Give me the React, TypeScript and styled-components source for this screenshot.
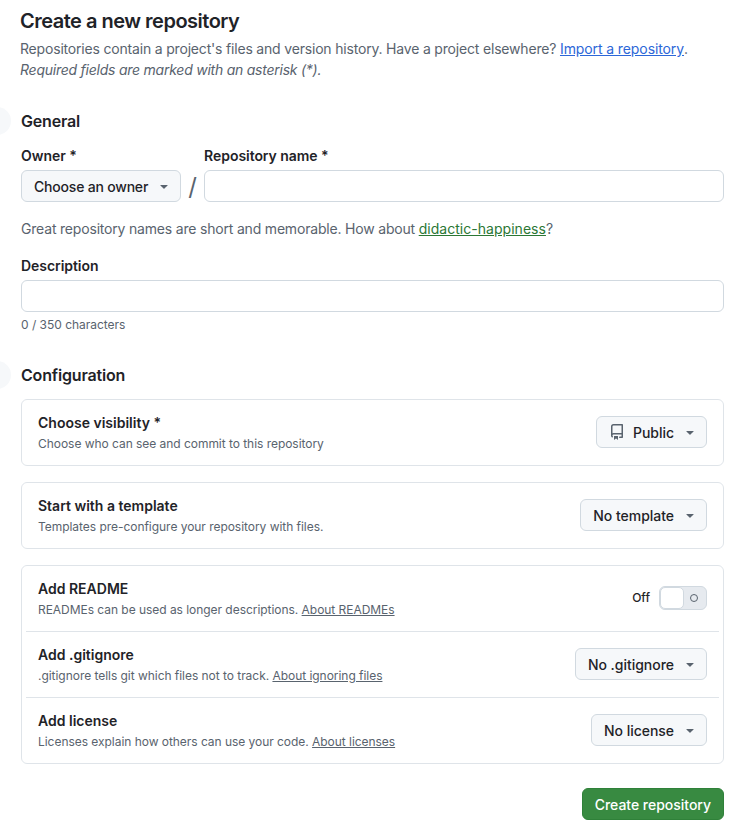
import React from "react";
import styled, { createGlobalStyle } from "styled-components";

const Global = createGlobalStyle`
  * { box-sizing: border-box; }
  html, body { margin: 0; padding: 0; background: #ffffff; }
  body {
    font-family: Inter, "Noto Sans", "Liberation Sans", sans-serif;
    color: #1f2328;
    font-size: 14px;
    overflow: hidden;
  }
`;

const Page = styled.main`
  width: 740px;
  height: 831px;
  padding: 11px 16px 0 20px;
  position: relative;
  overflow: hidden;
`;

const Title = styled.h1`
  margin: 0;
  font-size: 20px;
  line-height: 20px;
  font-weight: 600;
  letter-spacing: -0.5px;
`;

const Lead = styled.p`
  margin: 7px 0 0;
  color: #59636e;
  font-size: 14px;
  line-height: 21px;
  letter-spacing: -0.186px;
`;

const Note = styled.em`
  display: block;
  letter-spacing: -0.24px;
`;

const BlueLink = styled.a`
  color: #2c67d8;
  text-decoration: underline;
  letter-spacing: -0.1px;
`;

const GreenLink = styled.a`
  color: #2b7735;
  font-weight: 400;
  text-decoration: underline;
  letter-spacing: 0.03px;
`;

const Section = styled.section`
  position: relative;
  margin-left: 1px;
`;

const Step = styled.span`
  position: absolute;
  left: -38px;
  top: 0;
  width: 28px;
  height: 28px;
  border-radius: 50%;
  background: #f6f8fa;
`;

const SectionTitle = styled.h2`
  margin: 0;
  font-size: 16px;
  line-height: 28px;
  font-weight: 600;
  letter-spacing: -0.17px;
`;

const OwnerRow = styled.div`
  display: flex;
  align-items: flex-end;
  margin-top: 11px;
`;

const Field = styled.div<{ $grow?: boolean }>`
  display: flex;
  flex-direction: column;
  gap: 4px;
  flex: ${(p) => (p.$grow ? "1" : "none")};
`;

const Label = styled.label`
  font-size: 14px;
  line-height: 20px;
  font-weight: 600;
  letter-spacing: -0.05px;
`;

const Slash = styled.span`
  width: 23px;
  height: 32px;
  display: flex;
  align-items: center;
  justify-content: center;
  font-size: 24px;
  color: #59636e;
`;

const TextInput = styled.input`
  width: 100%;
  height: 32px;
  border: 1px solid #d1d9e0;
  border-radius: 6px;
  background: #fff;
  padding: 0 12px;
  font: inherit;
  display: block;
`;

const Select = styled.button<{ $tight?: boolean }>`
  height: 32px;
  padding: 0 8px 0 12px;
  display: inline-flex;
  align-items: center;
  gap: 8px;
  border: 1px solid #d1d9e0;
  border-radius: 6px;
  background: #f6f8fa;
  color: #1f2328;
  font-family: inherit;
  font-size: 14px;
  font-weight: 500;
  letter-spacing: ${(p) => (p.$tight ? "-0.2px" : "-0.03px")};
  flex: none;
  white-space: nowrap;
`;

const Icon = styled.svg`
  flex: none;
  display: block;
  fill: currentColor;
`;

const CaretIcon = styled(Icon)`
  color: #59636e;
`;

const RepoIcon = styled(Icon)`
  color: #59636e;
`;

const Hint = styled.p`
  margin: 17px 0 0;
  color: #59636e;
  font-size: 14px;
  line-height: 20px;
  letter-spacing: -0.19px;
`;

const Counter = styled.div`
  margin-top: 5px;
  color: #59636e;
  font-size: 12px;
  line-height: 16px;
  letter-spacing: -0.02px;
`;

const Cards = styled.div`
  display: flex;
  flex-direction: column;
  gap: 16px;
  margin-top: 10px;
`;

const Card = styled.div`
  border: 1px solid #d1d9e0b3;
  border-radius: 6px;
`;

const Row = styled.div`
  height: 65px;
  padding: 0 16px 1px;
  display: flex;
  align-items: center;
  justify-content: space-between;
  position: relative;

  & + & {
    height: 66px;
    padding-top: 1px;
  }

  & + &::before {
    content: "";
    position: absolute;
    left: 4px;
    right: 4px;
    top: 0;
    height: 1px;
    background: #d1d9e0b3;
  }
`;

const RowText = styled.div`
  display: flex;
  flex-direction: column;
  padding-top: 3px;
`;

const RowTitle = styled.div`
  font-size: 14px;
  line-height: 20px;
  font-weight: 600;
`;

const RowDesc = styled.div`
  margin-top: 1px;
  font-size: 12px;
  line-height: 20px;
  color: #59636e;
  letter-spacing: -0.04px;
`;

const RowLink = styled.a`
  color: #59636e;
  text-decoration: underline;
`;

const ToggleWrap = styled.div`
  display: flex;
  align-items: center;
  gap: 9px;
`;

const ToggleLabel = styled.span`
  margin-bottom: 1px;
  font-size: 12px;
  font-weight: 500;
  color: #1f2328;
`;

const Toggle = styled.span`
  width: 48px;
  height: 24px;
  border: 1px solid #d1d9e0;
  border-radius: 6px;
  background: #e6eaef;
  display: flex;
  align-items: center;
  justify-content: space-between;
  padding-right: 8px;
`;

const Knob = styled.span`
  width: 24px;
  height: 22px;
  border-radius: 5px;
  background: #fff;
  border: 1px solid #d1d9e0;
`;

const OffMark = styled.span`
  width: 8px;
  height: 8px;
  border-radius: 50%;
  border: 1px solid #59636e;
`;

const Footer = styled.div`
  display: flex;
  justify-content: flex-end;
  margin-top: 24px;
`;

const Primary = styled.button`
  height: 32px;
  padding: 0 12px;
  border: 1px solid #2f8139;
  border-radius: 6px;
  background: #388a41;
  color: #fff;
  font-family: inherit;
  font-size: 14px;
  font-weight: 500;
  letter-spacing: -0.02px;
`;

const Caret = () => (
  <CaretIcon width="16" height="16" viewBox="0 0 16 16" aria-hidden="true">
    <path d="m4.427 7.427 3.396 3.396a.25.25 0 0 0 .354 0l3.396-3.396A.25.25 0 0 0 11.396 7H4.604a.25.25 0 0 0-.177.427Z" />
  </CaretIcon>
);

const Repo = () => (
  <RepoIcon width="16" height="16" viewBox="0 0 16 16" aria-hidden="true">
    <path d="M2 2.5A2.5 2.5 0 0 1 4.5 0h8.75a.75.75 0 0 1 .75.75v12.5a.75.75 0 0 1-.75.75h-2.5a.75.75 0 0 1 0-1.5h1.75v-2h-8a1 1 0 0 0-.714 1.7.75.75 0 1 1-1.072 1.05A2.495 2.495 0 0 1 2 11.5Zm10.5-1h-8a1 1 0 0 0-1 1v6.708A2.486 2.486 0 0 1 4.5 9h8ZM5 12.25a.25.25 0 0 1 .25-.25h3.5a.25.25 0 0 1 .25.25v3.25a.25.25 0 0 1-.4.2l-1.45-1.087a.249.249 0 0 0-.3 0L5.4 15.7a.25.25 0 0 1-.4-.2Z" />
  </RepoIcon>
);

const Dropdown = ({ label, repo, tight }: { label: string; repo?: boolean; tight?: boolean }) => (
  <Select type="button" $tight={tight}>
    {repo && <Repo />}
    {label}
    <Caret />
  </Select>
);

const GeneralSection = styled(Section)`
  margin-top: 27px;
`;

const ConfigSection = styled(Section)`
  margin-top: 28px;
`;

const DescriptionField = styled(Field)`
  margin-top: 17px;
`;

export default function App() {
  return (
    <Page>
      <Global />
      <Title>Create a new repository</Title>
      <Lead>
        Repositories contain a project's files and version history. Have a project elsewhere?{" "}
        <BlueLink href="#">Import a repository</BlueLink>.
        <Note>Required fields are marked with an asterisk (*).</Note>
      </Lead>

      <GeneralSection>
        <Step />
        <SectionTitle>General</SectionTitle>
        <OwnerRow>
          <Field>
            <Label>Owner *</Label>
            <Dropdown label="Choose an owner" tight />
          </Field>
          <Slash>/</Slash>
          <Field $grow>
            <Label>Repository name *</Label>
            <TextInput />
          </Field>
        </OwnerRow>
        <Hint>
          Great repository names are short and memorable. How about{" "}
          <GreenLink href="#">didactic-happiness</GreenLink>?
        </Hint>
        <DescriptionField>
          <Label>Description</Label>
          <TextInput />
        </DescriptionField>
        <Counter>0 / 350 characters</Counter>
      </GeneralSection>

      <ConfigSection>
        <Step />
        <SectionTitle>Configuration</SectionTitle>
        <Cards>
          <Card>
            <Row>
              <RowText>
                <RowTitle>Choose visibility *</RowTitle>
                <RowDesc>Choose who can see and commit to this repository</RowDesc>
              </RowText>
              <Dropdown label="Public" repo />
            </Row>
          </Card>
          <Card>
            <Row>
              <RowText>
                <RowTitle>Start with a template</RowTitle>
                <RowDesc>Templates pre-configure your repository with files.</RowDesc>
              </RowText>
              <Dropdown label="No template" />
            </Row>
          </Card>
          <Card>
            <Row>
              <RowText>
                <RowTitle>Add README</RowTitle>
                <RowDesc>
                  READMEs can be used as longer descriptions. <RowLink href="#">About READMEs</RowLink>
                </RowDesc>
              </RowText>
              <ToggleWrap>
                <ToggleLabel>Off</ToggleLabel>
                <Toggle>
                  <Knob />
                  <OffMark />
                </Toggle>
              </ToggleWrap>
            </Row>
            <Row>
              <RowText>
                <RowTitle>Add .gitignore</RowTitle>
                <RowDesc>
                  .gitignore tells git which files not to track. <RowLink href="#">About ignoring files</RowLink>
                </RowDesc>
              </RowText>
              <Dropdown label="No .gitignore" />
            </Row>
            <Row>
              <RowText>
                <RowTitle>Add license</RowTitle>
                <RowDesc>
                  Licenses explain how others can use your code. <RowLink href="#">About licenses</RowLink>
                </RowDesc>
              </RowText>
              <Dropdown label="No license" />
            </Row>
          </Card>
        </Cards>
        <Footer>
          <Primary type="button">Create repository</Primary>
        </Footer>
      </ConfigSection>
    </Page>
  );
}
